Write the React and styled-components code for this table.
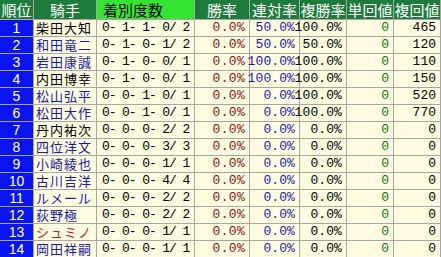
import styled, { createGlobalStyle } from 'styled-components';

const GlobalStyle = createGlobalStyle`
	body {
		margin: 0;
		background: #ffffff;
	}
`;

const Grid = styled.div`
	display: grid;
	grid-template-columns: 33px 62px 97px 54px 49px 46px 46px 46px;
	grid-auto-rows: 16px;
	grid-template-rows: 19px;
	gap: 1px;
	width: 440px;
	background: #a8a8a0;
	border-right: 1px solid #a8a8a0;
`;

const Head = styled.div`
	display: flex;
	align-items: center;
	justify-content: ${(p) => (p.$left ? 'flex-start' : 'center')};
	padding-left: ${(p) => (p.$left ? '6px' : '0')};
	background: ${(p) => (p.$bright ? '#33e633' : '#1d7b3c')};
	color: ${(p) => (p.$bright ? '#000000' : '#ffffff')};
	font-family: "Noto Sans CJK JP", sans-serif;
	font-size: 15px;
	line-height: 19px;
	white-space: nowrap;
`;

const Rank = styled.div`
	display: flex;
	align-items: center;
	justify-content: center;
	background: #0a14f0;
	color: #ffffff;
	font-family: "Liberation Sans", sans-serif;
	font-size: 14px;
	line-height: 16px;
`;

const Name = styled.div`
	display: flex;
	align-items: center;
	padding-left: 2px;
	background: #fffce2;
	color: ${(p) => p.$color};
	font-family: "Noto Sans CJK JP", sans-serif;
	font-size: 13px;
	letter-spacing: 1px;
	line-height: 16px;
	white-space: nowrap;
`;

const Num = styled.div`
	display: flex;
	align-items: center;
	justify-content: ${(p) => (p.$left ? 'flex-start' : 'flex-end')};
	padding: 0 4px 0 ${(p) => (p.$left ? '5px' : '0')};
	background: #fffce2;
	color: ${(p) => p.$color || '#000000'};
	font-family: "Liberation Mono", monospace;
	font-size: 13px;
	letter-spacing: ${(p) => p.$spacing || '0px'};
	line-height: 16px;
	white-space: pre;
`;

const rows = [
	['柴田大知', '#000000', '0- 1- 1- 0/ 2', '50.0%', '100.0%', '465'],
	['和田竜二', '#1a1aa8', '0- 1- 0- 1/ 2', '50.0%', ' 50.0%', '120'],
	['岩田康誠', '#1a1aa8', '0- 1- 0- 0/ 1', '100.0%', '100.0%', '110'],
	['内田博幸', '#000000', '0- 1- 0- 0/ 1', '100.0%', '100.0%', '150'],
	['松山弘平', '#1a1aa8', '0- 0- 1- 0/ 1', '0.0%', '100.0%', '520'],
	['松田大作', '#1a1aa8', '0- 0- 1- 0/ 1', '0.0%', '100.0%', '770'],
	['丹内祐次', '#000000', '0- 0- 0- 2/ 2', '0.0%', '0.0%', '0'],
	['四位洋文', '#1a1aa8', '0- 0- 0- 3/ 3', '0.0%', '0.0%', '0'],
	['小崎綾也', '#1a1aa8', '0- 0- 0- 1/ 1', '0.0%', '0.0%', '0'],
	['古川吉洋', '#1a1aa8', '0- 0- 0- 4/ 4', '0.0%', '0.0%', '0'],
	['ルメール', '#1a1aa8', '0- 0- 0- 2/ 2', '0.0%', '0.0%', '0'],
	['荻野極', '#1a1aa8', '0- 0- 0- 2/ 2', '0.0%', '0.0%', '0'],
	['シュミノ', '#cc2222', '0- 0- 0- 1/ 1', '0.0%', '0.0%', '0'],
	['岡田祥嗣', '#1a1aa8', '0- 0- 0- 1/ 1', '0.0%', '0.0%', '0'],
];

const App = () => {
	return (
		<>
			<GlobalStyle />
			<Grid>
				<Head>順位</Head>
				<Head>騎手</Head>
				<Head $bright $left>着別度数</Head>
				<Head>勝率</Head>
				<Head>連対率</Head>
				<Head>複勝率</Head>
				<Head>単回値</Head>
				<Head>複回値</Head>
				{rows.map((r, i) => [
					<Rank key={`r${i}`}>{i + 1}</Rank>,
					<Name key={`n${i}`} $color={r[1]}>{r[0]}</Name>,
					<Num key={`d${i}`} $left $spacing="-1.1px">{r[2]}</Num>,
					<Num key={`w${i}`} $color="#8b1010" $spacing="0.3px">0.0%</Num>,
					<Num key={`t${i}`} $color="#1a1aa8" $spacing="0.1px">{r[3]}</Num>,
					<Num key={`f${i}`} $spacing="0.1px">{r[4]}</Num>,
					<Num key={`s${i}`} $color="#0a7a0a">0</Num>,
					<Num key={`m${i}`}>{r[5]}</Num>,
				])}
			</Grid>
		</>
	);
};

export default App;
